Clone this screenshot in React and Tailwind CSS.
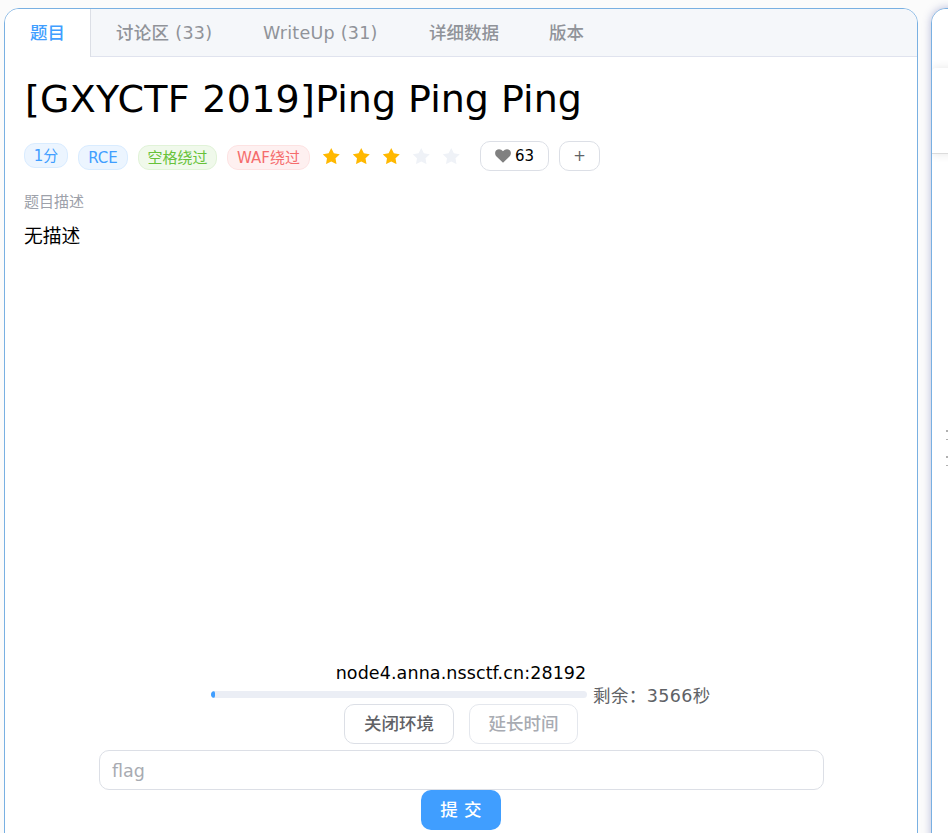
const tabs = ["讨论区 (33)", "WriteUp (31)", "详细数据", "版本"];
const tabStyles = [
  "w-[147px] pl-[25px] tracking-[0.3px]",
  "w-[166px] pl-[25px] tracking-[0.25px]",
  "w-[120px] pl-[25px]",
  "w-[85px] pl-[25px]",
];

const tags = [
  { label: "1分", style: "w-11 -mt-[2px] mb-[2px] text-[#409eff] bg-[#ecf5ff] border-[#d9ecff]" },
  { label: "RCE", style: "w-[50px] text-[#409eff] bg-[#ecf5ff] border-[#d9ecff]" },
  { label: "空格绕过", style: "w-[79px] text-[#67c23a] bg-[#f0f9eb] border-[#e1f3d8]" },
  { label: "WAF绕过", style: "w-[83px] text-[#f56c6c] bg-[#fef0f0] border-[#fde2e2]" },
];

function Star({ active }) {
  return (
    <svg viewBox="0 0 1024 1024" className={`size-[22.5px] shrink-0 ${active ? "text-[#ffb800]" : "text-[#eff2f7]"}`}>
      <path
        fill="currentColor"
        d="M283.84 867.84 512 747.776l228.16 119.936a6.4 6.4 0 0 0 9.28-6.72l-43.52-254.08 184.512-179.904a6.4 6.4 0 0 0-3.52-10.88l-255.104-37.12L517.76 147.904a6.4 6.4 0 0 0-11.52 0L392.192 379.072l-255.104 37.12a6.4 6.4 0 0 0-3.52 10.88L318.08 606.976l-43.584 254.08a6.4 6.4 0 0 0 9.28 6.72z"
      />
    </svg>
  );
}

function Heart() {
  return (
    <svg viewBox="0 0 16 14" className="w-4 h-[14px] text-[#808080]">
      <path
        fill="currentColor"
        d="M8 13.7 1.5 7.4C-.4 5.5-.2 2.7 1.3 1.3 3.200-.4 6.300.1 8 2.300 9.700.1 12.800-.4 14.700 1.300c1.500 1.400 1.700 4.200-.200 6.100Z"
      />
    </svg>
  );
}

function TabBar() {
  return (
    <div className="flex h-12 shrink-0 text-[17.5px] leading-[48px] font-medium whitespace-nowrap">
      <div className="w-[86px] bg-white border-r border-[#dcdfe6] pl-[25px] text-[#409eff]">题目</div>
      <div className="flex flex-1 bg-[#f5f7fa] border-b border-[#e0e3ee] text-[#909399]">
        {tabs.map((tab, i) => (
          <div key={tab} className={tabStyles[i]}>{tab}</div>
        ))}
      </div>
    </div>
  );
}

function Meta() {
  return (
    <div className="flex h-[30px] items-center mt-[14px]">
      <div className="flex gap-[10px] mt-[3px]">
        {tags.map((tag) => (
          <span
            key={tag.label}
            className={`h-[25px] rounded-[11px] border text-center text-[15px] leading-[25px] whitespace-nowrap ${tag.style}`}
          >
            {tag.label}
          </span>
        ))}
      </div>
      <div className="flex gap-[7.5px] ml-[10px]">
        {[1, 2, 3, 4, 5].map((n) => (
          <Star key={n} active={n <= 3} />
        ))}
      </div>
      <button className="flex items-center justify-center gap-[4px] ml-[17.5px] w-[69px] h-[30px] rounded-[10px] border border-[#dcdfe6] text-[15px] text-black">
        <Heart />
        <span>63</span>
      </button>
      <button className="ml-[10px] w-[41px] h-[30px] rounded-[10px] border border-[#dcdfe6] text-[15px] text-[#606266]">+</button>
    </div>
  );
}

function Environment() {
  return (
    <div className="flex flex-col items-center text-[17.5px]">
      <div className="h-[26px] leading-[26px] tracking-[0.1px] text-black">node4.anna.nssctf.cn:28192</div>
      <div className="flex items-start w-[501px] h-[18px] ml-px">
        <div className="mt-[5px] w-[376px] h-[7px] rounded-full bg-[#ebeef5] overflow-hidden">
          <div className="w-1 h-full rounded-full bg-[#409eff]" />
        </div>
        <div className="ml-[6px] mt-px leading-[18px] tracking-[0.4px] text-[#606266] whitespace-nowrap">剩余：3566秒</div>
      </div>
      <div className="flex gap-[15px] font-medium">
        <button className="w-[110px] h-10 rounded-[10px] border border-[#dcdfe6] text-[#606266]">关闭环境</button>
        <button className="w-[109px] h-10 rounded-[10px] border border-[#e4e7ed] text-[#a8abb2]">延长时间</button>
      </div>
      <input
        placeholder="flag"
        className="mt-[6px] ml-px w-[725px] h-10 rounded-[10px] border border-[#dcdfe6] px-3 pt-[2px] placeholder:text-[#a8abb2] outline-none"
      />
      <button className="w-20 h-10 rounded-[10px] bg-[#409eff] text-white font-medium tracking-[0.3px]">提 交</button>
    </div>
  );
}

function SidePanel() {
  return (
    <div className="ml-[13px] w-[340px] h-[900px] shrink-0 rounded-[15px] border border-[#79b0e2] bg-white overflow-hidden shadow-[0_0_8px_rgba(80,90,170,0.4)]">
      <div className="h-[59px] bg-white" />
      <div className="h-[86px] rounded-tl-[4px] border-b border-[#dcdcdc] bg-white shadow-[0_0_10px_rgba(0,0,0,0.1)]" />
      <div className="flex flex-col ml-[14px] mt-[276px] w-[2px]">
        <i className="h-[2px] bg-[#b0b0b0]" />
        <i className="mt-[7px] h-px bg-[#b0b0b0]" />
        <i className="mt-[16px] h-[2px] bg-[#b0b0b0]" />
        <i className="mt-[7px] h-px bg-[#b0b0b0]" />
      </div>
    </div>
  );
}

export default function App() {
  return (
    <div className="flex w-[948px] h-[833px] overflow-hidden bg-[#fbfbfb] pt-2 pl-1 font-['DejaVu_Sans','Noto_Sans_CJK_SC',sans-serif]">
      <main className="flex flex-col w-[914px] h-[900px] shrink-0 rounded-[15px] border border-[#79b0e2] bg-white overflow-hidden">
        <TabBar />
        <section className="px-[19px]">
          <h1 className="mt-[18px] h-[52px] pl-px leading-[49px] text-[38px] text-black whitespace-nowrap">
            <span className="tracking-[0.27px]">[GXYCTF 2019]</span>Ping Ping Ping
          </h1>
          <Meta />
          <div className="mt-5 h-[22px] leading-[22px] text-[15px] text-[#9da1aa]">题目描述</div>
          <div className="mt-[10px] h-7 leading-7 text-[18.75px] text-black">无描述</div>
        </section>
        <div className="mt-[409px]">
          <Environment />
        </div>
      </main>
      <SidePanel />
    </div>
  );
}
